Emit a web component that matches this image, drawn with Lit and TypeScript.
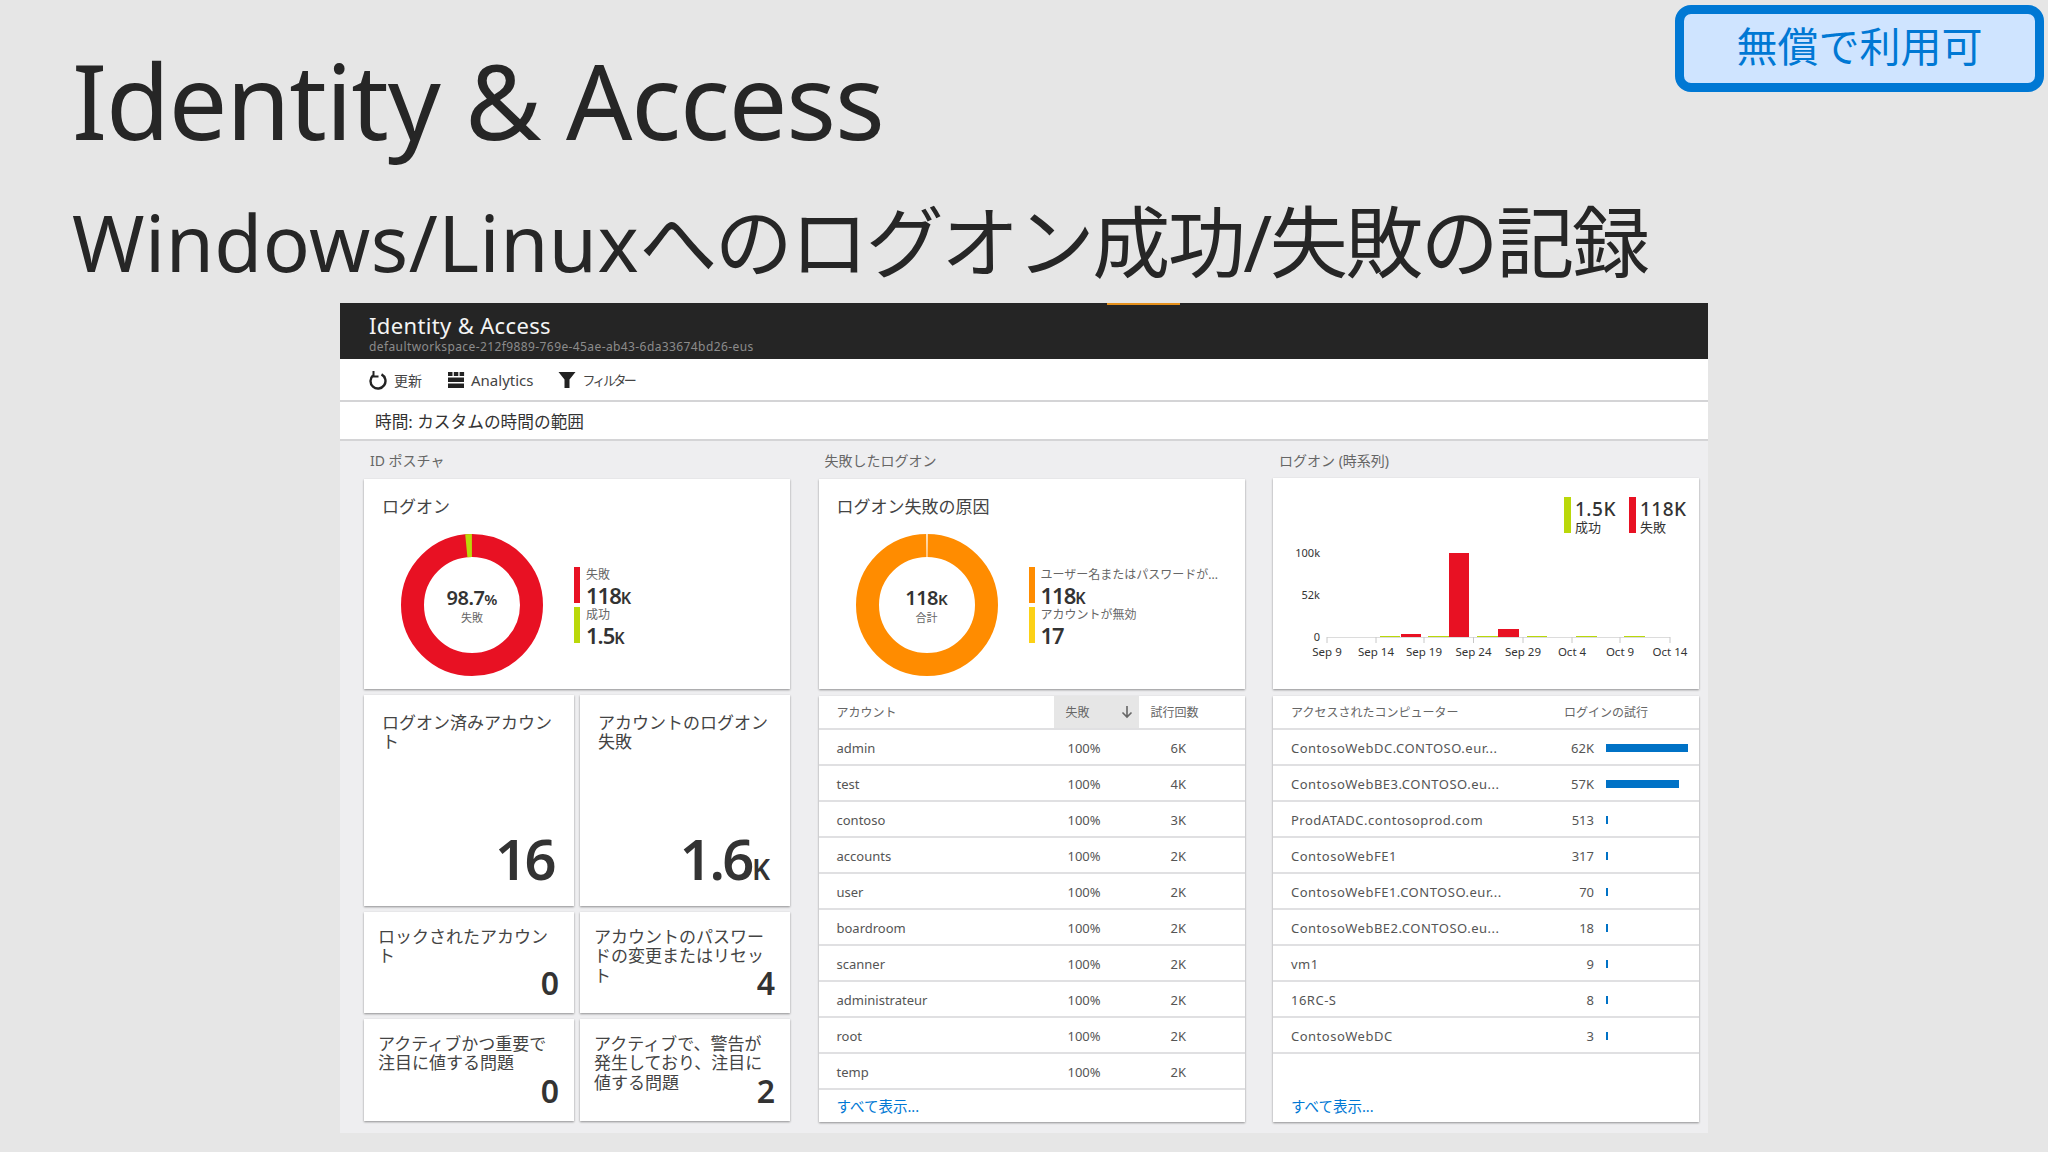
import {LitElement, css, html, svg} from 'lit';
import {customElement} from 'lit/decorators.js';

const RED = '#e81123';
const GREEN = '#bad80a';
const ORANGE = '#ff8c00';
const YELLOW = '#fcd116';

const accounts = [
  ['admin', '100%', '6K'],
  ['test', '100%', '4K'],
  ['contoso', '100%', '3K'],
  ['accounts', '100%', '2K'],
  ['user', '100%', '2K'],
  ['boardroom', '100%', '2K'],
  ['scanner', '100%', '2K'],
  ['administrateur', '100%', '2K'],
  ['root', '100%', '2K'],
  ['temp', '100%', '2K'],
];

const computers: [string, string, number][] = [
  ['ContosoWebDC.CONTOSO.eur...', '62K', 82],
  ['ContosoWebBE3.CONTOSO.eu...', '57K', 73],
  ['ProdATADC.contosoprod.com', '513', 2],
  ['ContosoWebFE1', '317', 2],
  ['ContosoWebFE1.CONTOSO.eur...', '70', 2],
  ['ContosoWebBE2.CONTOSO.eu...', '18', 2],
  ['vm1', '9', 2],
  ['16RC-S', '8', 2],
  ['ContosoWebDC', '3', 2],
];

const ticks: [string, number][] = [
  ['Sep 9', 54],
  ['Sep 14', 103],
  ['Sep 19', 151],
  ['Sep 24', 200.5],
  ['Sep 29', 250],
  ['Oct 4', 299],
  ['Oct 9', 347],
  ['Oct 14', 397],
];

// x, width, top of each bar in the card's own coordinates (axis at y 159)
const bars: [number, number, number, string][] = [
  [107, 20, 158, GREEN],
  [128, 20, 156, RED],
  [155, 21, 158, GREEN],
  [176, 20, 75, RED],
  [204, 21, 158, GREEN],
  [225, 21, 151, RED],
  [254, 20, 158, GREEN],
  [303, 21, 158, GREEN],
  [351, 21, 158, GREEN],
];

const donut = (segments: [string, number, number][]) => {
  const r = 59.5;
  const c = 2 * Math.PI * r;
  return html`<svg class="ring" width="142" height="142" viewBox="0 0 142 142">
    ${segments.map(([color, from, to]) => svg`<circle cx="71" cy="71" r=${r} fill="none" stroke=${color}
      stroke-width="23" stroke-dasharray="${((to - from) / 360) * c} ${c}"
      transform="rotate(${from - 90} 71 71)"></circle>`)}
  </svg>`;
};

@customElement('app-root')
export class AppRoot extends LitElement {
  static styles = css`
    :host {
      display: block;
      width: 2048px;
      height: 1152px;
      background: #e6e6e6;
      font-family: 'Noto Sans', 'Noto Sans CJK JP', sans-serif;
      color: #333;
      overflow: hidden;
    }

    * {
      box-sizing: border-box;
    }

    .slide {
      position: relative;
      height: 100%;
      padding-top: 40px;
    }

    .badge {
      position: absolute;
      left: 1675px;
      top: 5px;
      width: 369px;
      height: 87px;
      border: 9px solid #0078d4;
      border-radius: 16px;
      background: #cfe4ff;
      color: #0078d4;
      font-size: 41px;
      line-height: 60px;
      text-align: center;
      font-family: 'Noto Sans CJK JP', sans-serif;
    }

    h1 {
      margin: 0 0 0 72px;
      font-size: 104px;
      line-height: 120px;
      font-weight: 400;
      letter-spacing: -1.2px;
      color: #262626;
    }

    h2 {
      margin: 30px 0 0 72px;
      font-size: 78px;
      line-height: 105px;
      font-weight: 400;
      letter-spacing: -2.5px;
      color: #262626;
      white-space: nowrap;
    }

    h2 span {
      letter-spacing: 0.5px;
    }

    .blade {
      display: flex;
      flex-direction: column;
      width: 1368px;
      height: 830px;
      margin: 8px 0 0 340px;
      background: #eeeef0;
    }

    .head {
      position: relative;
      flex: 0 0 56px;
      padding: 9px 0 0 29px;
      background: #252525;
      color: #f4f4f4;
    }

    .head::before {
      content: '';
      position: absolute;
      left: 767px;
      top: 0;
      width: 73px;
      height: 2px;
      background: #e5901c;
    }

    .head-title {
      font-size: 22px;
      line-height: 27px;
      letter-spacing: 0.35px;
    }

    .head-sub {
      font-size: 12px;
      line-height: 15px;
      letter-spacing: 0.4px;
      color: #8c8c8c;
    }

    .toolbar {
      display: flex;
      align-items: center;
      flex: 0 0 43px;
      padding-left: 28px;
      background: #fff;
      border-bottom: 2px solid #d4d4d6;
      font-size: 14px;
      color: #444;
    }

    .tool {
      display: flex;
      align-items: center;
      gap: 6px;
      margin-right: 25px;
    }

    .tool-wide {
      font-size: 15px;
    }

    .tool-narrow {
      font-size: 13px;
      letter-spacing: -2.6px;
    }

    .timebar {
      flex: 0 0 37px;
      padding: 3px 0 0 35px;
      background: #fff;
      border-bottom: 2px solid #d4d4d6;
      font-size: 16.7px;
      line-height: 34px;
      color: #333;
    }

    .columns {
      display: grid;
      grid-template-columns: repeat(3, 426px);
      column-gap: 28.5px;
      padding-left: 24px;
    }

    .column {
      display: flex;
      flex-direction: column;
    }

    .section {
      height: 38px;
      padding-left: 6px;
      font-size: 14px;
      line-height: 39px;
      color: #666;
    }

    .card {
      background: #fff;
      box-shadow: 0 1px 2px rgba(0, 0, 0, 0.4);
    }

    .donut-card {
      height: 210px;
      padding: 18px 0 0 18px;
    }

    .card-title {
      font-size: 17px;
      line-height: 19px;
      color: #444;
    }

    .donut-row {
      display: flex;
      align-items: center;
      margin: 18px 0 0 19px;
    }

    .donut {
      display: grid;
      flex: none;
      width: 142px;
      height: 142px;
      margin-right: 31px;
    }

    .ring,
    .donut-text {
      grid-area: 1 / 1;
    }

    .donut-text {
      align-self: center;
      text-align: center;
    }

    .donut-value {
      font-size: 20px;
      line-height: 24px;
      font-weight: 600;
      letter-spacing: -0.5px;
    }

    .donut-value small {
      font-size: 15px;
      letter-spacing: 0;
    }

    .donut-label {
      font-size: 11px;
      line-height: 14px;
      color: #666;
    }

    .legend {
      display: flex;
      flex-direction: column;
      gap: 4px;
    }

    .legend-item {
      height: 36px;
      padding: 1px 0 0 6px;
      border-left: 6px solid;
    }

    .legend-label {
      height: 14px;
      font-size: 12px;
      line-height: 14px;
      color: #666;
      white-space: nowrap;
    }

    .legend-value {
      font-size: 22px;
      line-height: 26px;
      font-weight: 600;
      letter-spacing: -1px;
    }

    .legend-value small {
      font-size: 16px;
      letter-spacing: 0;
    }

    .tiles {
      display: grid;
      grid-template-columns: 210px 210px;
      grid-template-rows: 211px 101px 102px;
      gap: 6px;
      margin-top: 6px;
    }

    .tile {
      display: grid;
      padding: 18px 20px 0 18px;
    }

    .tile.small {
      padding: 15px 15px 0 14px;
    }

    .tile-title,
    .tile-value {
      grid-area: 1 / 1;
    }

    .tile-title {
      font-size: 17px;
      line-height: 19.3px;
      color: #444;
    }

    .tile-value {
      align-self: end;
      justify-self: end;
      font-size: 56px;
      line-height: 74px;
      font-weight: 600;
      letter-spacing: -2.5px;
    }

    .tile-value small {
      font-size: 28px;
      letter-spacing: 0;
    }

    .tile.small .tile-value {
      font-size: 32px;
      line-height: 58px;
      letter-spacing: 0;
    }

    .chart-card {
      height: 211px;
      margin-top: -1px;
    }

    .chart-card svg {
      display: block;
    }

    .chart-card text {
      font-family: 'Noto Sans', 'Noto Sans CJK JP', sans-serif;
      fill: #333;
    }

    .legend-num {
      letter-spacing: 0.5px;
    }

    .table {
      display: flex;
      flex-direction: column;
      height: 426px;
      margin-top: 7px;
    }

    .row {
      display: grid;
      align-items: center;
      height: 36px;
      padding-top: 1px;
      border-bottom: 2px solid #e0e0e2;
      font-size: 13px;
      color: #555;
    }

    .accounts .row {
      grid-template-columns: 235px 85px 1fr;
    }

    .computers .row {
      grid-template-columns: 270px 51px 1fr;
    }

    .row.header {
      height: 34px;
      padding-top: 0;
      font-size: 12px;
      color: #666;
    }

    .name {
      padding-left: 18px;
      white-space: nowrap;
    }

    .computers .row:not(.header) .name {
      letter-spacing: 0.5px;
    }

    .sorted {
      display: flex;
      align-items: center;
      justify-content: space-between;
      align-self: stretch;
      padding: 0 6px 0 12px;
      background: #e6e6e6;
    }

    .fail {
      padding-left: 14px;
    }

    .tries {
      padding-left: 32px;
    }

    .header .tries {
      padding-left: 12px;
    }

    .count {
      text-align: right;
    }

    .attempts {
      grid-column: 2 / 4;
      padding-left: 21px;
    }

    .bar-cell {
      padding-left: 12px;
    }

    .bar {
      height: 8px;
      background: #0072c6;
    }

    .more {
      margin-top: auto;
      padding-left: 18px;
      font-size: 14.5px;
      line-height: 31px;
      color: #0078d4;
    }
  `;

  private legend(items: [string, string, string, string][]) {
    return html`<div class="legend">
      ${items.map(([color, label, value, unit]) => html`
        <div class="legend-item" style="border-color: ${color}">
          <div class="legend-label">${label}</div>
          <div class="legend-value">${value}<small>${unit}</small></div>
        </div>
      `)}
    </div>`;
  }

  private tile(title: string, value: string, unit = '', small = true) {
    return html`<div class="card tile ${small ? 'small' : ''}">
      <div class="tile-title">${title}</div>
      <div class="tile-value">${value}<small>${unit}</small></div>
    </div>`;
  }

  private chart() {
    return html`<svg width="426" height="211" viewBox="0 0 426 211">
      <rect x="291" y="19" width="7" height="36" fill=${GREEN}></rect>
      <text class="legend-num" x="302" y="38" font-size="19" font-weight="500">1.5K</text>
      <text x="302" y="54" font-size="13">成功</text>
      <rect x="356" y="19" width="7" height="36" fill=${RED}></rect>
      <text class="legend-num" x="367" y="38" font-size="19" font-weight="500">118K</text>
      <text x="367" y="54" font-size="13">失敗</text>
      <text x="47" y="79" font-size="11" text-anchor="end">100k</text>
      <text x="47" y="121" font-size="11" text-anchor="end">52k</text>
      <text x="47" y="163" font-size="11" text-anchor="end">0</text>
      <line x1="54" x2="397" y1="159.5" y2="159.5" stroke="#dcdcdc"></line>
      ${bars.map(([x, w, y, c]) => svg`<rect x=${x} y=${y} width=${w} height=${159 - y} fill=${c}></rect>`)}
      ${ticks.map(([label, x]) => svg`
        <line x1=${x} x2=${x} y1="159" y2="165" stroke="#c8c8c8"></line>
        <text x=${x} y="178" font-size="11.5" text-anchor="middle">${label}</text>
      `)}
    </svg>`;
  }

  render() {
    return html`
      <div class="slide">
        <div class="badge">無償で利用可</div>
        <h1>Identity &amp; Access</h1>
        <h2><span>Windows/Linux</span>へのログオン成功/失敗の記録</h2>
        <div class="blade">
          <div class="head">
            <div class="head-title">Identity &amp; Access</div>
            <div class="head-sub">defaultworkspace-212f9889-769e-45ae-ab43-6da33674bd26-eus</div>
          </div>
          <div class="toolbar">
            <div class="tool">
              <svg width="20" height="20" viewBox="0 0 20 20" fill="none" stroke="#222" stroke-width="2.4">
                <path d="M13.5 4.4 A7.5 7.5 0 1 1 5 5.4"></path>
                <path d="M5.5 1 V6.5 H10.5" stroke-width="2"></path>
              </svg>
              更新
            </div>
            <div class="tool tool-wide">
              <svg width="18" height="18" viewBox="0 0 18 18" fill="#222">
                <rect x="1" y="1" width="4.5" height="4"></rect>
                <rect x="6.8" y="1" width="4.5" height="4"></rect>
                <rect x="12.6" y="1" width="4.5" height="4"></rect>
                <rect x="1" y="6.5" width="16" height="4.5"></rect>
                <rect x="1" y="12.5" width="16" height="4.5"></rect>
              </svg>
              Analytics
            </div>
            <div class="tool tool-narrow">
              <svg width="18" height="18" viewBox="0 0 18 18" fill="#222">
                <path d="M0.5 1 H17.5 L11.5 8.5 V17 H6.5 V8.5 Z"></path>
              </svg>
              フィルター
            </div>
          </div>
          <div class="timebar">時間: カスタムの時間の範囲</div>
          <div class="columns">
            <div class="column">
              <div class="section">ID ポスチャ</div>
              <div class="card donut-card">
                <div class="card-title">ログオン</div>
                <div class="donut-row">
                  <div class="donut">
                    ${donut([[RED, 0, 360], [GREEN, -5.5, 0]])}
                    <div class="donut-text">
                      <div class="donut-value">98.7<small>%</small></div>
                      <div class="donut-label">失敗</div>
                    </div>
                  </div>
                  ${this.legend([[RED, '失敗', '118', 'K'], [GREEN, '成功', '1.5', 'K']])}
                </div>
              </div>
              <div class="tiles">
                ${this.tile('ログオン済みアカウント', '16', '', false)}
                ${this.tile('アカウントのログオン失敗', '1.6', 'K', false)}
                ${this.tile('ロックされたアカウント', '0')}
                ${this.tile('アカウントのパスワードの変更またはリセット', '4')}
                ${this.tile('アクティブかつ重要で注目に値する問題', '0')}
                ${this.tile('アクティブで、警告が発生しており、注目に値する問題', '2')}
              </div>
            </div>
            <div class="column">
              <div class="section">失敗したログオン</div>
              <div class="card donut-card">
                <div class="card-title">ログオン失敗の原因</div>
                <div class="donut-row">
                  <div class="donut">
                    ${donut([[ORANGE, 0, 360], ['#fff', -0.6, 0.6]])}
                    <div class="donut-text">
                      <div class="donut-value">118<small>K</small></div>
                      <div class="donut-label">合計</div>
                    </div>
                  </div>
                  ${this.legend([
                    [ORANGE, 'ユーザー名またはパスワードが...', '118', 'K'],
                    [YELLOW, 'アカウントが無効', '17', ''],
                  ])}
                </div>
              </div>
              <div class="card table accounts">
                <div class="row header">
                  <div class="name">アカウント</div>
                  <div class="sorted">
                    失敗
                    <svg width="12" height="14" viewBox="0 0 12 14" fill="none" stroke="#666" stroke-width="1.6">
                      <path d="M6 1 V12 M1.5 7.5 L6 12 L10.5 7.5"></path>
                    </svg>
                  </div>
                  <div class="tries">試行回数</div>
                </div>
                ${accounts.map(([name, fail, tries]) => html`
                  <div class="row">
                    <div class="name">${name}</div>
                    <div class="fail">${fail}</div>
                    <div class="tries">${tries}</div>
                  </div>
                `)}
                <div class="more">すべて表示...</div>
              </div>
            </div>
            <div class="column">
              <div class="section">ログオン (時系列)</div>
              <div class="card chart-card">${this.chart()}</div>
              <div class="card table computers">
                <div class="row header">
                  <div class="name">アクセスされたコンピューター</div>
                  <div class="attempts">ログインの試行</div>
                </div>
                ${computers.map(([name, count, width]) => html`
                  <div class="row">
                    <div class="name">${name}</div>
                    <div class="count">${count}</div>
                    <div class="bar-cell"><div class="bar" style="width: ${width}px"></div></div>
                  </div>
                `)}
                <div class="more">すべて表示...</div>
              </div>
            </div>
          </div>
        </div>
      </div>
    `;
  }
}
